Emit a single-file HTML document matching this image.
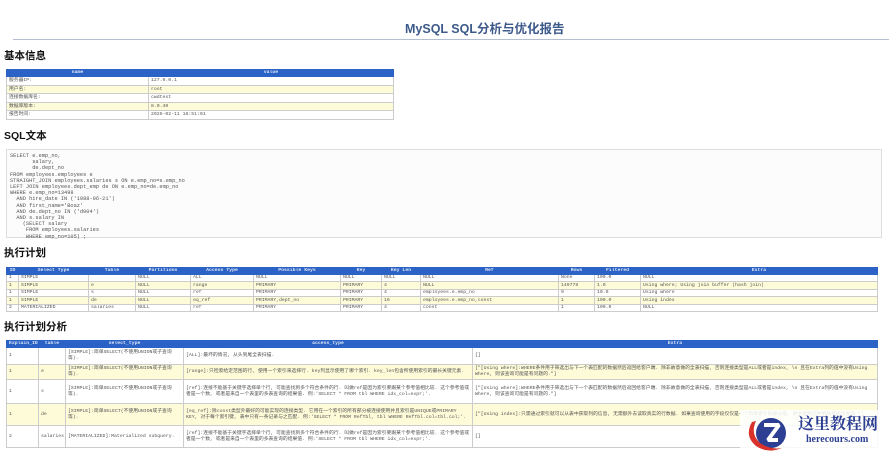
<!DOCTYPE html>
<html><head><meta charset="utf-8"><style>
*{margin:0;padding:0;box-sizing:border-box}
body{width:889px;height:453px;background:#fff;position:relative;overflow:hidden;font-family:"Liberation Sans","Noto Sans CJK SC",sans-serif}
.a{position:absolute}
h1{position:absolute;left:405px;top:18px;font-size:12.5px;color:#3d5a8a;font-weight:bold;white-space:nowrap}
.line{position:absolute;left:13px;right:0;top:39px;border-top:1px solid #b4bfd0}
h2{position:absolute;left:4px;font-size:10.5px;font-weight:bold;color:#111;font-family:"Liberation Sans","Noto Sans CJK SC",sans-serif}
table{position:absolute;border-collapse:collapse;font-family:"Liberation Mono","Noto Sans CJK SC",monospace;font-size:4.8px;color:#555;table-layout:fixed}
td,th{border:1px solid #ccc;padding:0 2px;overflow:hidden;white-space:nowrap;vertical-align:middle;line-height:5.6px}
th{background:#2a62c6;color:#dfe6f5;font-weight:bold;text-align:center;border-color:#2a62c6}
tr.y td{background:#fdfbd8}
.w td{white-space:normal}
pre{position:absolute;left:6px;top:149px;width:876px;height:89px;border:1px solid #ddd;background:#fcfcfc;font-family:"Liberation Mono",monospace;font-size:5.3px;line-height:6.2px;color:#555;padding:3px 3px}
</style></head><body>
<h1>MySQL SQL分析与优化报告</h1>
<div class="line"></div>
<h2 style="top:48px">基本信息</h2>
<table style="left:6px;top:69px;width:388px">
<col style="width:142px"><col>
<tr style="height:7px"><th>name</th><th>value</th></tr>
<tr style="height:8.6px"><td>服务器IP:</td><td>127.0.0.1</td></tr>
<tr class="y" style="height:8.6px"><td>用户名:</td><td>root</td></tr>
<tr style="height:8.6px"><td>连接数据库名:</td><td>cwdtest</td></tr>
<tr class="y" style="height:8.6px"><td>数据库版本:</td><td>8.0.40</td></tr>
<tr style="height:8.6px"><td>报告时间:</td><td>2025-02-11 16:51:01</td></tr>
</table>
<h2 style="top:128px">SQL文本</h2>
<pre>SELECT e.emp_no,
       salary,
       de.dept_no
FROM employees.employees e
STRAIGHT_JOIN employees.salaries s ON e.emp_no=s.emp_no
LEFT JOIN employees.dept_emp de ON e.emp_no=de.emp_no
WHERE e.emp_no=13498
  AND hire_date IN ('1988-06-21')
  AND first_name='Boaz'
  AND de.dept_no IN ('d004')
  AND s.salary IN
    (SELECT salary
     FROM employees.salaries
     WHERE emp_no=105) ;</pre>
<h2 style="top:245px">执行计划</h2>
<table style="left:6px;top:267px;width:872px">
<col style="width:12px"><col style="width:70px"><col style="width:47px"><col style="width:55px"><col style="width:63px"><col style="width:87px"><col style="width:41px"><col style="width:39px"><col style="width:138px"><col style="width:36px"><col style="width:46px"><col>
<tr style="height:6.5px"><th>ID</th><th>Select Type</th><th>Table</th><th>Partitions</th><th>Access Type</th><th>Possible Keys</th><th>Key</th><th>Key Len</th><th>Ref</th><th>Rows</th><th>Filtered</th><th>Extra</th></tr>
<tr style="height:7.5px"><td>1</td><td>SIMPLE</td><td></td><td>NULL</td><td>ALL</td><td>NULL</td><td>NULL</td><td>NULL</td><td>NULL</td><td>None</td><td>100.0</td><td>NULL</td></tr>
<tr class="y" style="height:7.5px"><td>1</td><td>SIMPLE</td><td>e</td><td>NULL</td><td>range</td><td>PRIMARY</td><td>PRIMARY</td><td>4</td><td>NULL</td><td>149778</td><td>1.0</td><td>Using where; Using join buffer (hash join)</td></tr>
<tr style="height:7.5px"><td>1</td><td>SIMPLE</td><td>s</td><td>NULL</td><td>ref</td><td>PRIMARY</td><td>PRIMARY</td><td>4</td><td>employees.e.emp_no</td><td>9</td><td>10.0</td><td>Using where</td></tr>
<tr class="y" style="height:7.5px"><td>1</td><td>SIMPLE</td><td>de</td><td>NULL</td><td>eq_ref</td><td>PRIMARY,dept_no</td><td>PRIMARY</td><td>16</td><td>employees.e.emp_no,const</td><td>1</td><td>100.0</td><td>Using index</td></tr>
<tr style="height:7.5px"><td>2</td><td>MATERIALIZED</td><td>salaries</td><td>NULL</td><td>ref</td><td>PRIMARY</td><td>PRIMARY</td><td>4</td><td>const</td><td>1</td><td>100.0</td><td>NULL</td></tr>
</table>
<h2 style="top:319px">执行计划分析</h2>
<table class="w" style="left:6px;top:340px;width:872px">
<col style="width:32px"><col style="width:27px"><col style="width:118px"><col style="width:289px"><col>
<tr style="height:7px"><th>Explain_ID</th><th>table</th><th>select_type</th><th>access_type</th><th>Extra</th></tr>
<tr style="height:17px"><td>1</td><td></td><td>[SIMPLE]:简单SELECT(不使用UNION或子查询等).</td><td>[ALL]:最坏的情况, 从头到尾全表扫描.</td><td>[]</td></tr>
<tr class="y" style="height:15px"><td>1</td><td>e</td><td>[SIMPLE]:简单SELECT(不使用UNION或子查询等).</td><td>[range]:只检索给定范围的行, 使用一个索引来选择行. key列显示使用了哪个索引. key_len包含所使用索引的最长关键元素.</td><td>["[Using where]:WHERE条件用于筛选出与下一个表匹配的数据然后返回给客户端. 除非故意做的全表扫描, 否则连接类型是ALL或者是index, \n 且在Extra列的值中没有Using Where, 则该查询可能是有问题的."]</td></tr>
<tr style="height:24px"><td>1</td><td>s</td><td>[SIMPLE]:简单SELECT(不使用UNION或子查询等).</td><td>[ref]:连接不能基于关键字选择单个行, 可能查找到多个符合条件的行. 叫做ref是因为索引要跟某个参考值相比较. 这个参考值或者是一个数, 或者是来自一个表里的多表查询的结果值. 例:'SELECT * FROM tbl WHERE idx_col=expr;'.</td><td>["[Using where]:WHERE条件用于筛选出与下一个表匹配的数据然后返回给客户端. 除非故意做的全表扫描, 否则连接类型是ALL或者是index, \n 且在Extra列的值中没有Using Where, 则该查询可能是有问题的."]</td></tr>
<tr class="y" style="height:22px"><td>1</td><td>de</td><td>[SIMPLE]:简单SELECT(不使用UNION或子查询等).</td><td>[eq_ref]:除const类型外最好的可能实现的连接类型. 它用在一个索引的所有部分被连接使用并且索引是UNIQUE或PRIMARY KEY, 对于每个索引键, 表中只有一条记录与之匹配. 例:'SELECT * FROM RefTbl, tbl WHERE RefTbl.col=tbl.col;'.</td><td>["[Using index]:只需通过索引就可以从表中获取列的信息, 无需额外去读取真实的行数据. 如果查询使用的字段仅仅是一个简单索引的部分值, 则会使用这种策略来优化查询."]</td></tr>
<tr style="height:22px"><td>2</td><td>salaries</td><td>[MATERIALIZED]:Materialized subquery.</td><td>[ref]:连接不能基于关键字选择单个行, 可能查找到多个符合条件的行. 叫做ref是因为索引要跟某个参考值相比较. 这个参考值或者是一个数, 或者是来自一个表里的多表查询的结果值. 例:'SELECT * FROM tbl WHERE idx_col=expr;'.</td><td>[]</td></tr>
</table>
<div class="a" style="left:740px;top:410px;width:149px;height:43px;background:rgba(255,255,255,0.85)"></div>
<svg class="a" style="left:742px;top:412px" width="60" height="41" viewBox="0 0 60 41">
<circle cx="29" cy="21" r="15" fill="#2c3f93"/>
<path d="M22 13 H37 L26 28 H36" stroke="#fff" stroke-width="4" fill="none" stroke-linejoin="bevel"/>
<path d="M10 10 Q2 24 14 34 Q26 42 40 36 Q28 38 18 31 Q8 22 14 9 Z" fill="#d9322a"/>
</svg>
<div class="a" style="left:798px;top:413px;font-family:'Noto Serif CJK SC',serif;font-weight:bold;font-size:16px;line-height:19px;color:#2c3f93">这里教程网</div>
<div class="a" style="left:806px;top:434px;font-family:'Liberation Serif',serif;font-weight:bold;font-size:10px;line-height:12px;color:#2c3f93">herecours.com</div>
</body></html>
